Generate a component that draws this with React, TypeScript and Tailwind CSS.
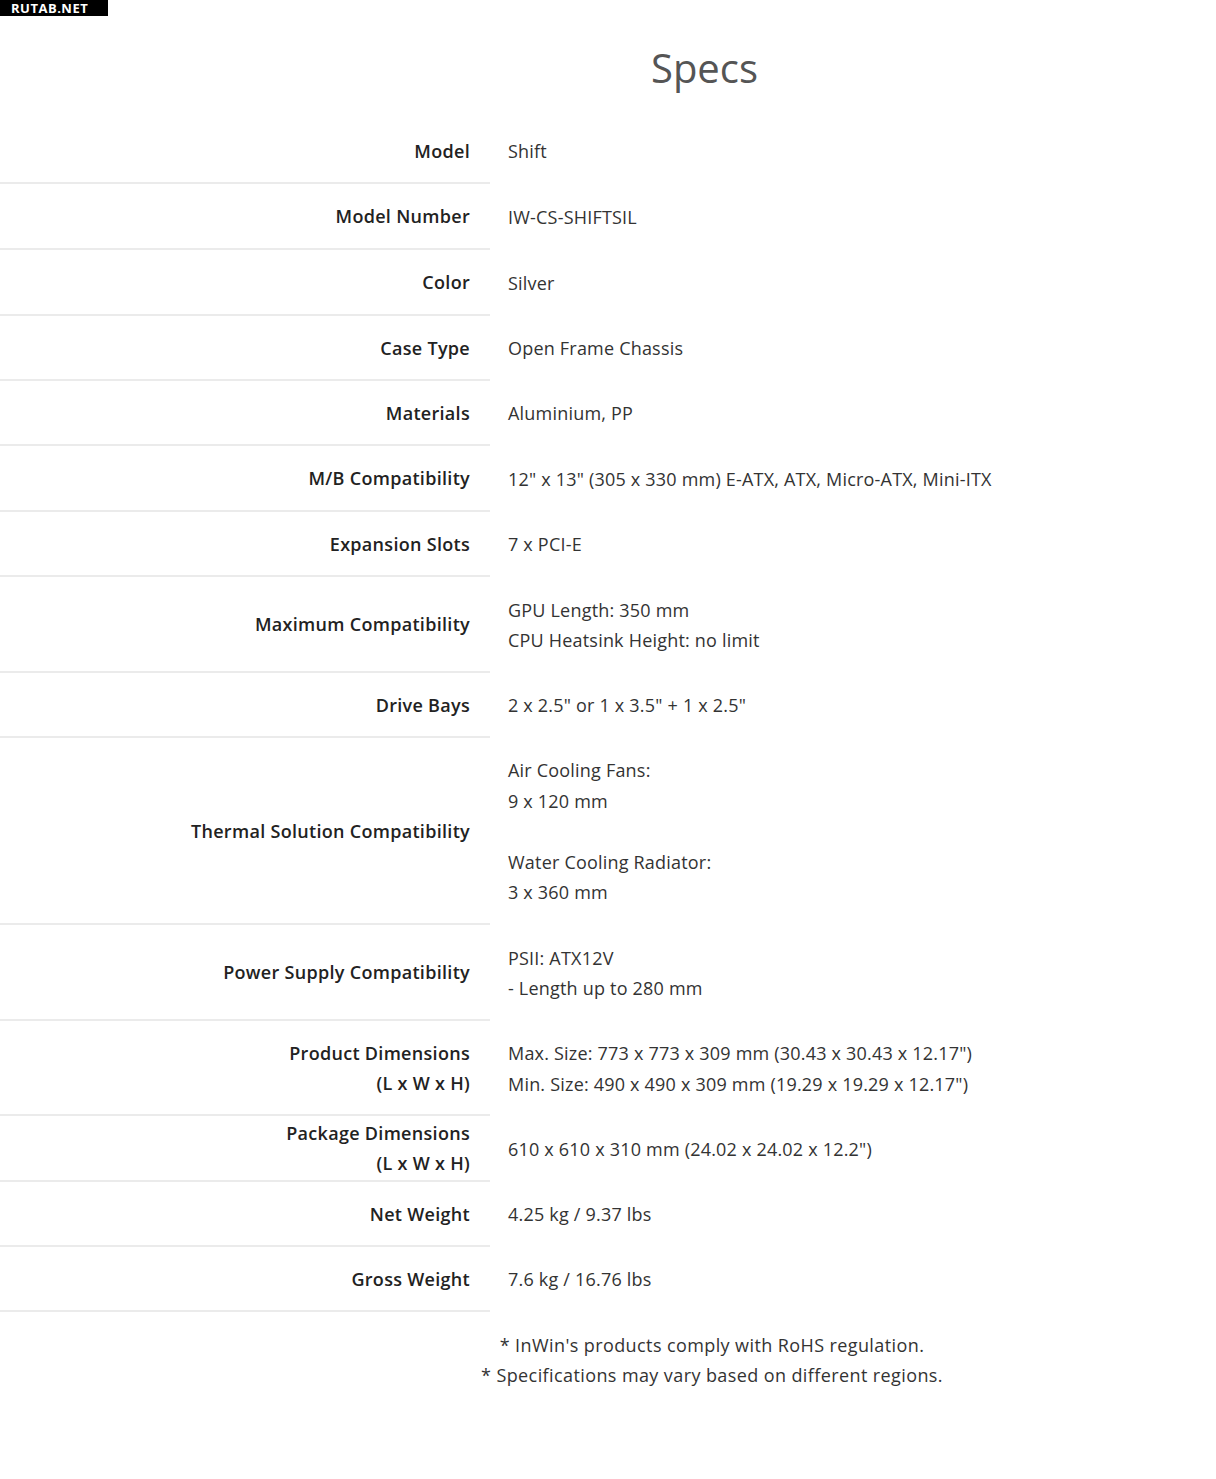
const rows: { label: string[]; value: string[]; h: string }[] = [
  { label: ['Model'], value: ['Shift'], h: 'h-[65px]' },
  { label: ['Model Number'], value: ['IW-CS-SHIFTSIL'], h: 'h-[66px]' },
  { label: ['Color'], value: ['Silver'], h: 'h-[66px]' },
  { label: ['Case Type'], value: ['Open Frame Chassis'], h: 'h-[65px]' },
  { label: ['Materials'], value: ['Aluminium, PP'], h: 'h-[65px]' },
  {
    label: ['M/B Compatibility'],
    value: ['12" x 13" (305 x 330 mm) E-ATX, ATX, Micro-ATX, Mini-ITX'],
    h: 'h-[66px]',
  },
  { label: ['Expansion Slots'], value: ['7 x PCI-E'], h: 'h-[65px]' },
  {
    label: ['Maximum Compatibility'],
    value: ['GPU Length: 350 mm', 'CPU Heatsink Height: no limit'],
    h: 'h-[96px]',
  },
  { label: ['Drive Bays'], value: ['2 x 2.5" or 1 x 3.5" + 1 x 2.5"'], h: 'h-[65px]' },
  {
    label: ['Thermal Solution Compatibility'],
    value: ['Air Cooling Fans:', '9 x 120 mm', '', 'Water Cooling Radiator:', '3 x 360 mm'],
    h: 'h-[187px]',
  },
  {
    label: ['Power Supply Compatibility'],
    value: ['PSII: ATX12V', '- Length up to 280 mm'],
    h: 'h-[96px]',
  },
  {
    label: ['Product Dimensions', '(L x W x H)'],
    value: [
      'Max. Size: 773 x 773 x 309 mm (30.43 x 30.43 x 12.17")',
      'Min. Size: 490 x 490 x 309 mm (19.29 x 19.29 x 12.17")',
    ],
    h: 'h-[95px]',
  },
  {
    label: ['Package Dimensions', '(L x W x H)'],
    value: ['610 x 610 x 310 mm (24.02 x 24.02 x 12.2")'],
    h: 'h-[66px]',
  },
  { label: ['Net Weight'], value: ['4.25 kg / 9.37 lbs'], h: 'h-[65px]' },
  { label: ['Gross Weight'], value: ['7.6 kg / 16.76 lbs'], h: 'h-[65px]' },
];

export default function App() {
  return (
    <div
      className="relative w-[1216px] h-[1479px] bg-white text-[#333]"
      style={{ fontFamily: '"Open Sans", "Noto Sans", sans-serif' }}
    >
      <div className="absolute left-0 top-0 h-4 w-[108px] bg-black text-white text-[13px] font-bold leading-4 pl-[11px] tracking-[0.5px]">
        RUTAB.NET
      </div>

      <h2 className="pt-[42px] pl-[193px] text-center text-[40px] leading-[52px] text-[#555]">
        Specs
      </h2>

      <div className="mt-[25px]">
        {rows.map((row) => (
          <div key={row.label.join(' ')} className={`flex ${row.h}`}>
            <div className="w-[490px] shrink-0 border-b-2 border-[#ebebeb] flex flex-col justify-center items-end pr-5 text-[18px] leading-[30px] tracking-[0.3px] font-semibold text-[#222]">
              {row.label.map((l) => (
                <span key={l}>{l}</span>
              ))}
            </div>
            <div className="flex flex-col justify-center pl-[18px] text-[18px] leading-[30.5px] tracking-[0.2px] text-[#333]">
              {row.value.map((v, i) => (
                <span key={i} className="min-h-[30.5px]">
                  {v}
                </span>
              ))}
            </div>
          </div>
        ))}
      </div>

      <div className="pt-[18px] pl-[208px] text-center text-[18px] leading-[30px] tracking-[0.4px] text-[#333]">
        <p>* InWin's products comply with RoHS regulation.</p>
        <p>* Specifications may vary based on different regions.</p>
      </div>
    </div>
  );
}
